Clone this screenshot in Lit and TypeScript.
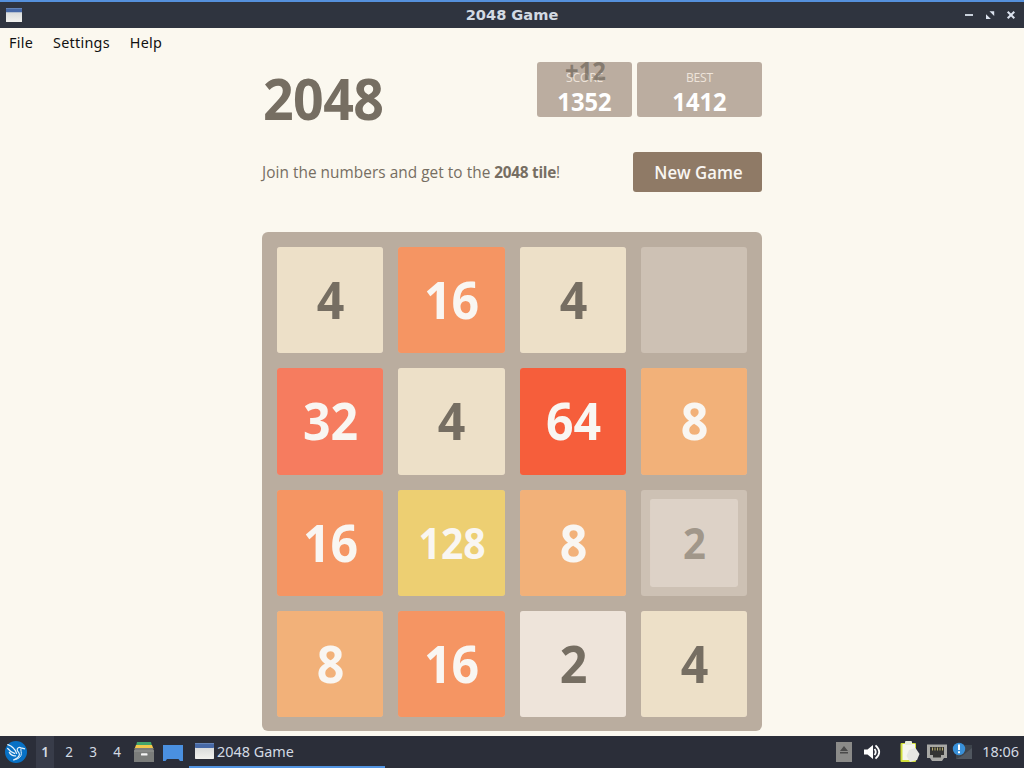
import { LitElement, html, svg, css } from 'lit';
import { customElement, property } from 'lit/decorators.js';

// Small window icon, used in the title bar and the task list
const windowIcon = (id: string, width: number, height: number) => html`
  <svg width=${width} height=${height} viewBox="0 0 17 15" preserveAspectRatio="none">
    <defs>
      <linearGradient id=${id} x1="0" y1="0" x2="0" y2="1">
        <stop offset="0" stop-color="#cfd2d3" />
        <stop offset="1" stop-color="#f1f1ee" />
      </linearGradient>
    </defs>
    <rect width="17" height="15" rx="0.6" fill="url(#${id})" />
    <rect width="17" height="4.6" rx="0.6" fill="#4668a6" />
    <rect width="17" height="1" fill="#6685b8" />
  </svg>
`;

@customElement('title-bar')
export class TitleBar extends LitElement {
  static styles = css`
    :host {
      display: grid;
      grid-template-columns: 1fr auto 1fr;
      align-items: center;
      box-sizing: border-box;
      height: 28px;
      padding: 0 6px;
      border-top: 2px solid #5590dc;
      background: #2f343f;
      color: #d3dae3;
      font: bold 14.6px/26px 'DejaVu Sans', sans-serif;
    }
    svg {
      display: block;
    }
    .buttons {
      display: flex;
      justify-content: flex-end;
    }
  `;

  render() {
    return html`
      <div>${windowIcon('title-icon', 16, 14)}</div>
      <div>2048 Game</div>
      <div class="buttons">
        <svg width="56" height="14" viewBox="0 0 56 14" fill="none" stroke="#dbe2ee">
          <path d="M3 7H11" stroke-width="1.8" />
          <path d="M27.5 3.2H32.2V8ZM24 6.2V10.9H28.9Z" fill="#dbe2ee" stroke="none" />
          <path d="M45.7 3.7L52.3 10.3M52.3 3.7L45.7 10.3" stroke-width="2" />
        </svg>
      </div>
    `;
  }
}

@customElement('menu-bar')
export class MenuBar extends LitElement {
  static styles = css`
    :host {
      display: flex;
      gap: 20px;
      height: 30px;
      padding-left: 9px;
      color: #111;
      font: 14.4px/30px 'Noto Sans', sans-serif;
      letter-spacing: 0.25px;
    }
  `;

  @property({ type: Array })
  items: string[] = ['File', 'Settings', 'Help'];

  render() {
    return this.items.map((item) => html`<span>${item}</span>`);
  }
}

@customElement('game-header')
export class GameHeader extends LitElement {
  static styles = css`
    :host {
      display: block;
      padding-top: 4px;
      color: #766e62;
      font-family: 'Open Sans', 'Noto Sans', sans-serif;
    }
    .row {
      display: flex;
      justify-content: space-between;
      align-items: flex-start;
    }
    h1 {
      margin: 0;
      padding: 3px 0 1px 1px;
      font-size: 58px;
      font-weight: 700;
      line-height: 66px;
      letter-spacing: -0.6px;
      transform: scaleX(0.925);
      transform-origin: left;
    }
    .scores {
      display: flex;
      gap: 5px;
    }
    .score {
      position: relative;
      box-sizing: border-box;
      width: 95px;
      height: 55px;
      border-radius: 3px;
      background: #bbada0;
      color: #fff;
      text-align: center;
    }
    .best {
      width: 125px;
    }
    .label {
      padding-top: 7px;
      height: 17px;
      color: #eee4da;
      font-size: 12.5px;
      line-height: 17px;
      letter-spacing: -0.2px;
      transform: scaleX(0.97);
    }
    .value {
      font-size: 25px;
      font-weight: 700;
      line-height: 30px;
      transform: scaleX(0.95);
    }
    .addition {
      position: absolute;
      top: -7px;
      left: 1px;
      width: 100%;
      color: rgba(119, 110, 98, 0.8);
    }
    .intro {
      align-items: center;
      height: 40px;
      margin-top: 20px;
    }
    p {
      margin: 0;
      font-size: 16px;
      letter-spacing: 0.05px;
      transform: scaleX(0.96);
      transform-origin: left;
    }
    strong {
      letter-spacing: -0.3px;
    }
    .button {
      box-sizing: border-box;
      width: 129px;
      height: 40px;
      padding-left: 2px;
      border-radius: 3px;
      background: #8f7a66;
      color: #f9f6f2;
      text-align: center;
      font-size: 18px;
      font-weight: 600;
      line-height: 40px;
    }
    .button span {
      display: inline-block;
      transform: scaleX(0.93);
    }
  `;

  render() {
    return html`
      <div class="row">
        <h1>2048</h1>
        <div class="scores">
          <div class="score">
            <div class="label">SCORE</div>
            <div class="value">1352</div>
            <div class="value addition">+12</div>
          </div>
          <div class="score best">
            <div class="label">BEST</div>
            <div class="value">1412</div>
          </div>
        </div>
      </div>
      <div class="row intro">
        <p>Join the numbers and get to the <strong>2048 tile</strong>!</p>
        <div class="button"><span>New Game</span></div>
      </div>
    `;
  }
}

@customElement('game-board')
export class GameBoard extends LitElement {
  static styles = css`
    :host {
      display: grid;
      grid-template-columns: repeat(4, 106.25px);
      grid-auto-rows: 106.25px;
      gap: 15px;
      box-sizing: border-box;
      width: 500px;
      height: 499px;
      margin-top: 40px;
      padding: 15px;
      border-radius: 6px;
      background: #baad9f;
      font: 700 52.5px/104px 'Open Sans', 'Noto Sans', sans-serif;
    }
    .cell {
      border-radius: 3px;
      background: #cdc1b4;
    }
    .tile {
      box-sizing: border-box;
      height: 100%;
      padding-left: 1px;
      border-radius: 3px;
      color: #f9f6f2;
      text-align: center;
    }
    .tile span {
      display: block;
      transform: scaleX(0.92);
    }
    .tile-2 {
      background: #eee4da;
      color: #766e62;
    }
    .tile-4 {
      background: #ede0c8;
      color: #766e62;
    }
    .tile-8 {
      background: #f2b179;
    }
    .tile-16 {
      background: #f59563;
    }
    .tile-32 {
      background: #f67c5f;
    }
    .tile-64 {
      background: #f65e3b;
    }
    .tile-128 {
      padding-left: 2px;
      background: #edcf72;
      font-size: 42.5px;
      line-height: 106px;
    }
    .appearing {
      opacity: 0.5;
      transform: scale(0.83);
    }
  `;

  @property({ type: Array })
  cells: number[] = [4, 16, 4, 0, 32, 4, 64, 8, 16, 128, 8, 2, 8, 16, 2, 4];

  // Index of the tile that is still growing into place
  @property({ type: Number })
  fresh = 11;

  render() {
    return this.cells.map(
      (value, i) => html`
        <div class="cell">
          ${value
            ? html`<div class="tile tile-${value} ${i === this.fresh ? 'appearing' : ''}"><span>${value}</span></div>`
            : ''}
        </div>
      `
    );
  }
}

@customElement('task-bar')
export class TaskBar extends LitElement {
  static styles = css`
    :host {
      display: flex;
      justify-content: space-between;
      height: 32px;
      background: #2b2e39;
      color: #d3dae3;
      font: 14.4px/32px 'Noto Sans', sans-serif;
    }
    svg {
      display: block;
    }
    .side {
      display: flex;
      align-items: center;
    }
    .desk {
      width: 24px;
      padding-top: 1px;
      text-align: center;
      font-size: 13.5px;
      line-height: 31px;
    }
    .current {
      width: 18px;
      margin: 0 3px;
      background: #383c49;
      font-weight: 600;
    }
    .logo {
      padding: 0 6px 0 5px;
    }
    .launch {
      padding-left: 5px;
    }
    .launch-desktop {
      padding-left: 9px;
    }
    .task {
      display: flex;
      align-items: center;
      gap: 3px;
      box-sizing: border-box;
      width: 196px;
      height: 32px;
      margin-left: 6px;
      padding-left: 6px;
      border-bottom: 2px solid #5294e2;
      line-height: 30px;
    }
    .task span {
      padding-top: 1px;
    }
    .clock {
      padding: 0 5px 0 9px;
    }
  `;

  render() {
    return html`
      <div class="side">
        <svg class="logo" width="22" height="22" viewBox="0 0 22 22">
          <circle cx="11" cy="11" r="11" fill="#0871c5" />
          <path d="M2.8 3.6C7 5 10 7.4 11.6 12.4M2.6 7.4C4.4 9.8 6.6 11.2 9.6 12.4M4.4 11.4C5.6 13.8 8 15 10.6 14.8" fill="none" stroke="#e5f2fb" stroke-width="1.3" stroke-linecap="round" />
          <path d="M20 7.8L16 6.8C14 5.8 12 7 12.2 9C12.4 10.6 14.6 11.6 14.4 13.6C14 16.4 11.4 17.8 8.4 19" fill="none" stroke="#e5f2fb" stroke-width="1.2" stroke-linejoin="round" />
          <path d="M16 7.4C15.4 9.4 17 11.6 16 14.4C15 17 11.6 18.6 8.4 19" fill="none" stroke="#e5f2fb" stroke-width="1" />
        </svg>
        <span class="desk current">1</span>
        <span class="desk">2</span>
        <span class="desk">3</span>
        <span class="desk">4</span>
        <svg class="launch" width="20" height="22" viewBox="0 0 20 22">
          <path d="M3 1H17L18 5H2Z" fill="#43a56c" />
          <path d="M2 4H18L19.5 8H0.5Z" fill="#f2c84b" />
          <path d="M1 7H19L20 10V21H0V10Z" fill="#7b7d7b" />
          <path d="M0 10H20" stroke="#969896" />
          <rect x="7" y="12.3" width="6.5" height="2.3" rx="0.7" fill="#f5f5f5" />
        </svg>
        <svg class="launch-desktop" width="20" height="17" viewBox="0 0 20 17">
          <path d="M0 1H20V17H17L15.5 15H4L2.5 17H0Z" fill="#4a90e0" />
        </svg>
        <div class="task">${windowIcon('task-icon', 19, 16)}<span>2048 Game</span></div>
      </div>
      <div class="side">${this.tray()}<span class="clock">18:06</span></div>
    `;
  }

  // Eject, volume, clipboard, wired network and update notifier
  private tray() {
    return html`
      <svg width="138" height="24" viewBox="0 0 138 24">
        ${svg`
          <rect x="1" y="2" width="16" height="20" fill="#8b8b89" />
          <path d="M9 6L13 11H5ZM5 12H13V13.5H5Z" fill="#4a4a4a" />
          <path d="M29 9.5H32.5L38 5V19L32.5 14.5H29Z" fill="#fff" />
          <path d="M39.5 9Q42 12 39.5 15M40.5 5.3Q48 12 40.5 18.7" fill="none" stroke="#fff" stroke-width="1.8" />
          <rect x="65.5" y="3" width="15.5" height="19" rx="1" fill="#d2df3c" />
          <path d="M67.5 4H80V20H67.5Z" fill="#f6f6ee" />
          <rect x="70" y="1" width="7" height="4" rx="1" fill="#e9eddb" />
          <path d="M74 10L80.5 8L84.5 14L82 20L75 22L71.5 16Z" fill="#e6e6e2" />
          <path d="M92 4.5H112V18H109L107 21H97L95 18H92Z" fill="#a8a8a5" />
          <path d="M95 7H109V15H106V17.5H98V15H95Z" fill="#343434" />
          <path d="M97.5 7.5V10.5M100 7.5V10.5M102.5 7.5V10.5M105 7.5V10.5M107.5 7.5V10.5" stroke="#b8ae6a" />
          <rect x="121" y="5" width="16" height="14" fill="#3d444c" />
          <path d="M127 16L137 8V19H121Z" fill="#505760" />
          <circle cx="124" cy="9" r="6.2" fill="#3990d8" />
          <path d="M124 4.5V10M124 11.3V13.3" stroke="#fff" stroke-width="2" />
        `}
      </svg>
    `;
  }
}

@customElement('app-root')
export class AppRoot extends LitElement {
  static styles = css`
    :host {
      display: flex;
      flex-direction: column;
      height: 768px;
      overflow: hidden;
      background: #fbf8ef;
    }
    .game {
      flex: 1;
      width: 500px;
      margin: 0 auto;
    }
  `;

  render() {
    return html`
      <title-bar></title-bar>
      <menu-bar></menu-bar>
      <div class="game">
        <game-header></game-header>
        <game-board></game-board>
      </div>
      <task-bar></task-bar>
    `;
  }
}

declare global {
  interface HTMLElementTagNameMap {
    'title-bar': TitleBar;
    'menu-bar': MenuBar;
    'game-header': GameHeader;
    'game-board': GameBoard;
    'task-bar': TaskBar;
    'app-root': AppRoot;
  }
}
